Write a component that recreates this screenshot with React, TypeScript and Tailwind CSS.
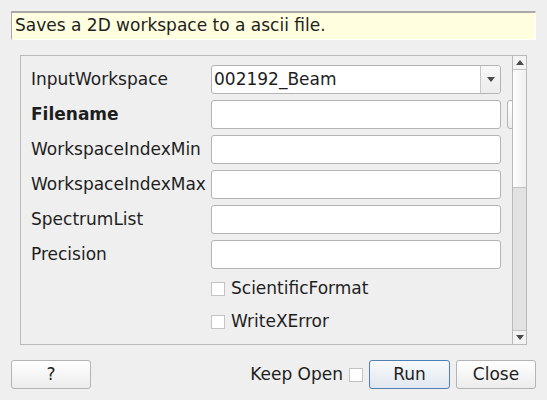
import { useState } from 'react';

const inputCls = 'h-[29px] w-[290px] shrink-0 rounded-[3px] border border-[#b4b4b4] bg-white';

function Checkbox({ checked, onChange }: { checked: boolean; onChange: () => void }) {
  return (
    <button
      onClick={onChange}
      className="flex h-[14px] w-[14px] shrink-0 items-center justify-center border border-[#c4c4c4] bg-white text-[11px] leading-none"
    >
      {checked ? '✓' : ''}
    </button>
  );
}

export default function App() {
  const [scientific, setScientific] = useState(false);
  const [writeX, setWriteX] = useState(false);
  const [keepOpen, setKeepOpen] = useState(false);

  const textRows = ['WorkspaceIndexMin', 'WorkspaceIndexMax', 'SpectrumList', 'Precision'];

  return (
    <div
      className="h-[400px] w-[547px] overflow-hidden bg-[#efefef] text-[17px] text-[#1e1e1e]"
      style={{ fontFamily: '"DejaVu Sans", sans-serif' }}
    >
      <div className="px-[11px] pt-[11px]">
        <div className="flex h-[29px] w-[525px] items-center border-t-2 border-l border-t-[#a9a9a9] border-l-[#a9a9a9] border-b border-r border-b-white border-r-white bg-[#ffffe0] pl-[3px]">
          Saves a 2D workspace to a ascii file.
        </div>

        <div className="ml-[9px] mt-[15px] flex h-[290px] w-[507px] border border-[#b9b9b9]">
          <div className="flex flex-1 flex-col gap-[6px] overflow-hidden pl-[10px] pt-[9px]">
            <div className="flex h-[29px] items-center">
              <span className="w-[180px] shrink-0">InputWorkspace</span>
              <div className="flex h-[29px] w-[290px] shrink-0 rounded-[3px] border border-[#b4b4b4] bg-white">
                <span className="flex flex-1 items-center pl-[2px]">002192_Beam</span>
                <div className="flex w-[20px] items-center justify-center rounded-r-[3px] border-l border-[#c8c8c8] bg-gradient-to-b from-[#f8f8f8] to-[#ececec]">
                  <svg width="8" height="5" viewBox="0 0 8 5">
                    <path d="M0 0H8L4 5Z" fill="#4a4a4a" />
                  </svg>
                </div>
              </div>
            </div>
            <div className="flex h-[29px] items-center">
              <span className="w-[180px] shrink-0 font-bold">Filename</span>
              <div className={inputCls} />
              <div className="ml-[6px] h-[29px] w-[80px] shrink-0 rounded-[3px] border border-[#b4b4b4] bg-gradient-to-b from-white to-[#ededed]" />
            </div>
            {textRows.map(label => (
              <div key={label} className="flex h-[29px] items-center">
                <span className="w-[180px] shrink-0">{label}</span>
                <div className={inputCls} />
              </div>
            ))}
            <div className="flex h-[27px] items-center gap-[6px] pl-[180px]">
              <Checkbox checked={scientific} onChange={() => setScientific(v => !v)} />
              <span>ScientificFormat</span>
            </div>
            <div className="flex h-[27px] items-center gap-[6px] pl-[180px]">
              <Checkbox checked={writeX} onChange={() => setWriteX(v => !v)} />
              <span>WriteXError</span>
            </div>
          </div>

          <div className="flex w-[14px] shrink-0 flex-col border-l border-[#b9b9b9]">
            <div className="flex h-[14px] items-center justify-center border-b border-[#c4c4c4] bg-[#f3f3f3]">
              <svg width="8" height="5" viewBox="0 0 8 5">
                <path d="M0 5H8L4 0Z" fill="#4a4a4a" />
              </svg>
            </div>
            <div className="h-[118px] border-b border-[#c4c4c4] bg-gradient-to-r from-[#fdfdfd] to-[#f0f0f0]" />
            <div className="flex-1 bg-[#e2e2e2]" />
            <div className="flex h-[14px] items-center justify-center border-t border-[#c4c4c4] bg-[#f3f3f3]">
              <svg width="8" height="5" viewBox="0 0 8 5">
                <path d="M0 0H8L4 5Z" fill="#4a4a4a" />
              </svg>
            </div>
          </div>
        </div>

        <div className="mt-[15px] flex h-[29px] items-center">
          <button className="h-[29px] w-[80px] rounded-[3px] border border-[#b4b4b4] bg-gradient-to-b from-white to-[#ececec]">
            ?
          </button>
          <div className="flex-1" />
          <span>Keep Open</span>
          <div className="ml-[6px]">
            <Checkbox checked={keepOpen} onChange={() => setKeepOpen(v => !v)} />
          </div>
          <button className="ml-[6px] h-[29px] w-[81px] rounded-[3px] border border-[#4f7fb3] bg-gradient-to-b from-[#f7f9fb] to-[#e2e8ef]">
            Run
          </button>
          <button className="ml-[6px] h-[29px] w-[80px] rounded-[3px] border border-[#b4b4b4] bg-gradient-to-b from-white to-[#ececec]">
            Close
          </button>
        </div>
      </div>
    </div>
  );
}
